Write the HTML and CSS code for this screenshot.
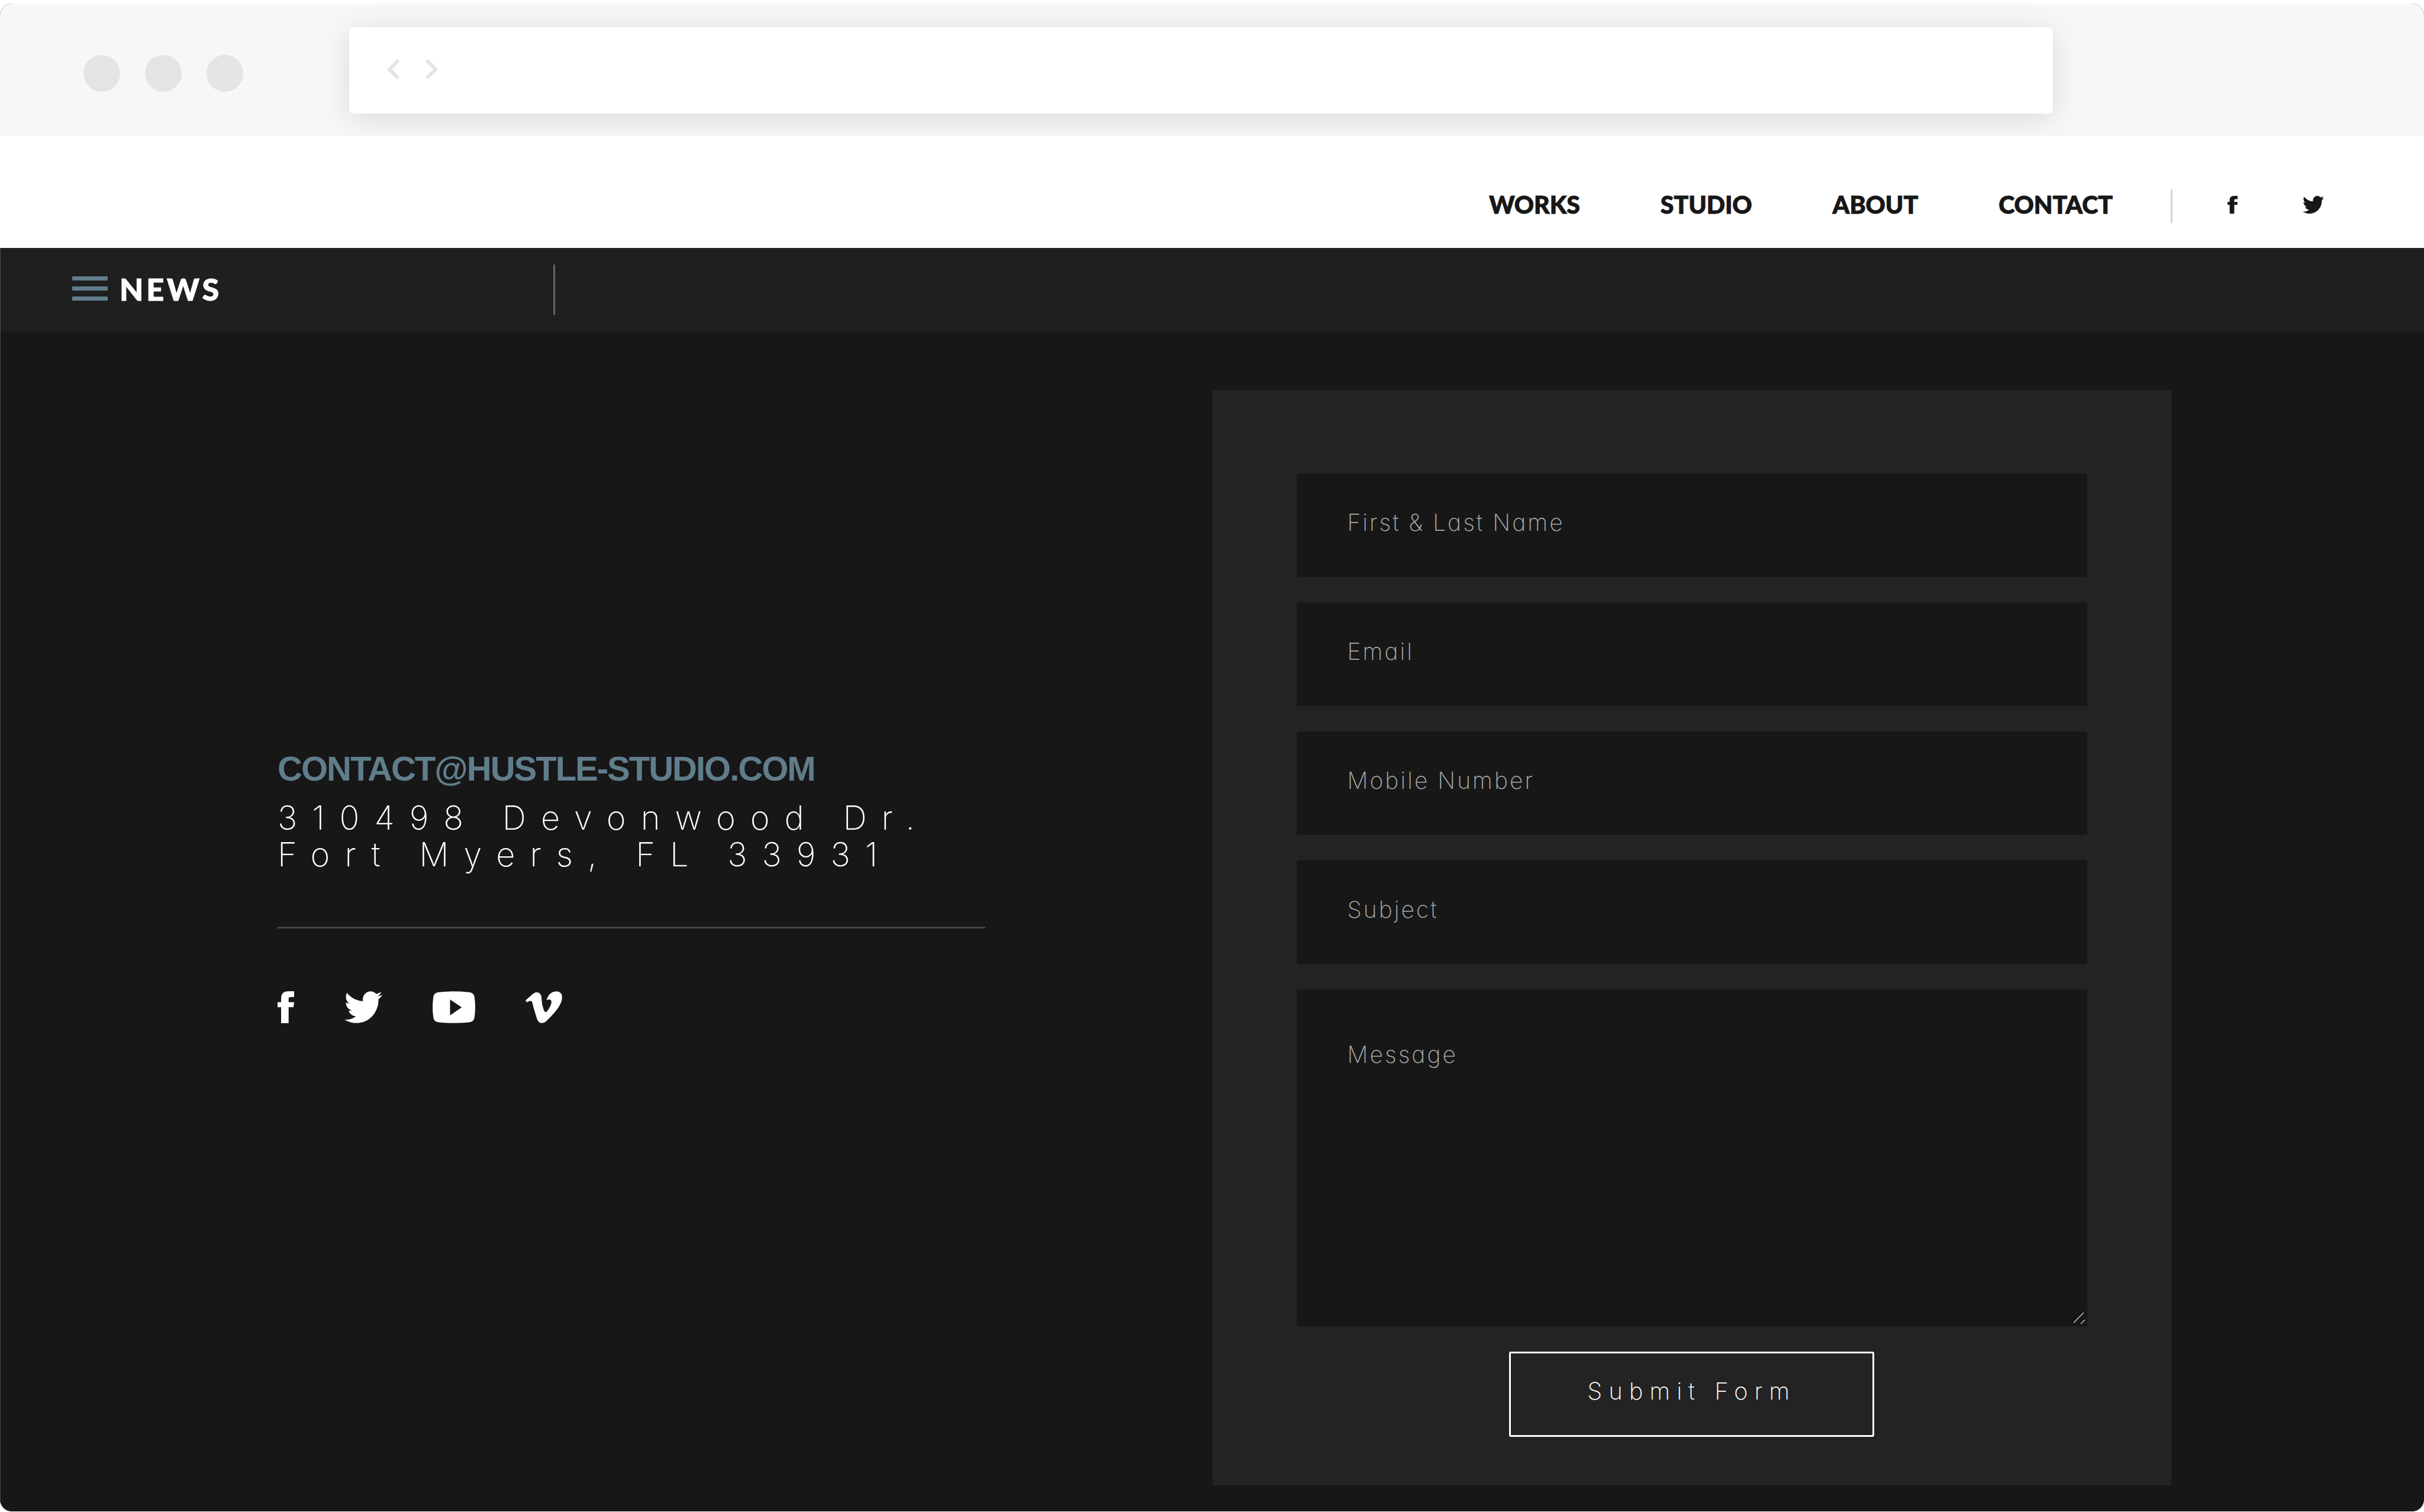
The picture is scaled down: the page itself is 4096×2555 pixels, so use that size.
FILE: index.html
```html
<!DOCTYPE html>
<html lang="en">
<head>
<meta charset="utf-8">
<title>Hustle Studio – Contact</title>
<link rel="stylesheet" href="styles.css">
</head>
<body>
<svg class="sprite" aria-hidden="true">
  <symbol id="facebook" viewBox="0 0 28 54" preserveAspectRatio="none"><path d="M6 54V27H0V18.500H6V12.500C6 4 10.500 0 18.500 0H28V9.800H22.500C19.500 9.800 18.700 11 18.700 13.500V18.500H28L27 27H18.700V54Z"/></symbol>
  <symbol id="twitter" viewBox="0 2.200 24 19.600" preserveAspectRatio="none"><path d="M23.954 4.569c-.885.389-1.83.654-2.825.775 1.014-.611 1.794-1.574 2.163-2.723-.951.555-2.005.959-3.127 1.184-.896-.959-2.173-1.559-3.591-1.559-2.717 0-4.92 2.203-4.92 4.917 0 .39.045.765.127 1.124C7.691 8.094 4.066 6.13 1.64 3.161c-.427.722-.666 1.561-.666 2.475 0 1.71.87 3.213 2.188 4.096-.807-.026-1.566-.248-2.228-.616v.061c0 2.385 1.693 4.374 3.946 4.827-.413.111-.849.171-1.296.171-.314 0-.615-.03-.916-.086.631 1.953 2.445 3.377 4.604 3.417-1.68 1.319-3.809 2.105-6.102 2.105-.39 0-.779-.023-1.17-.067 2.189 1.394 4.768 2.209 7.557 2.209 9.054 0 13.999-7.496 13.999-13.986 0-.209 0-.42-.015-.63.961-.689 1.8-1.56 2.46-2.548l-.047-.02z"/></symbol>
  <symbol id="youtube" viewBox="0 0 72 54"><path fill-rule="evenodd" d="M12 1.500Q36-1 60 1.500C68 2.200 70.500 5 71 12Q73 27 71 42C70.500 49 68 52 60 52.700Q36 55 12 52.700C4 52 1.500 49 1 42Q-1 27 1 12C1.500 5 4 2.200 12 1.500ZM29.500 13.900V40.700L49.200 27.300Z"/></symbol>
  <symbol id="vimeo" viewBox="0 0 62 54"><path d="M0 15.600L2.300 18.800L6 16.800Q10.300 15 11.400 18.800L13.400 27.300L19 45.400Q21.500 53.800 27.400 53.800Q31 53.800 34 51.500Q43 43.500 50.900 33.700Q59 23.500 61 16Q63 7 60 3.800Q57.500 0 51.500 .2Q39.500 1 35.500 15.100Q43 12 43.800 17.500Q44 21.500 40.800 27.300Q36.500 35 34.100 35.400Q32 35 30.800 31.600Q29 26 28.100 22L26.800 9.200Q25.500 1.500 18.100 1.700Q15 2 10.700 6Z"/></symbol>
</svg>
<div class="window">
  <div class="chrome">
    <div class="dots"><span class="dot"></span><span class="dot"></span><span class="dot"></span></div>
    <div class="address-bar">
      <svg class="arrow" viewBox="0 0 22 36" aria-hidden="true"><path d="M19 3L4 18L19 33"/></svg>
      <svg class="arrow" viewBox="0 0 22 36" aria-hidden="true"><path d="M3 3L18 18L3 33"/></svg>
    </div>
  </div>
  <header class="header">
    <nav class="nav">
      <a href="#works">WORKS</a>
      <a href="#studio">STUDIO</a>
      <a href="#about">ABOUT</a>
      <a href="#contact">CONTACT</a>
    </nav>
    <div class="header-social">
      <a href="#facebook" aria-label="Facebook"><svg class="icon-sm icon-sm-f"><use href="#facebook"/></svg></a>
      <a href="#twitter" aria-label="Twitter"><svg class="icon-sm icon-sm-t"><use href="#twitter"/></svg></a>
    </div>
  </header>
  <div class="news-bar">
    <button class="news-toggle" type="button">
      <span class="burger"><span></span><span></span><span></span></span>
      <span>NEWS</span>
    </button>
  </div>
  <main class="main">
    <section class="contact">
      <a class="email" href="mailto:contact@hustle-studio.com">CONTACT@HUSTLE-STUDIO.COM</a>
      <address class="address">310498 Devonwood Dr.<br>Fort Myers, FL 33931</address>
      <hr class="rule">
      <div class="social">
        <a href="#facebook" aria-label="Facebook"><svg class="icon icon-f"><use href="#facebook"/></svg></a>
        <a href="#twitter" aria-label="Twitter"><svg class="icon icon-t"><use href="#twitter"/></svg></a>
        <a href="#youtube" aria-label="YouTube"><svg class="icon icon-y"><use href="#youtube"/></svg></a>
        <a href="#vimeo" aria-label="Vimeo"><svg class="icon icon-v"><use href="#vimeo"/></svg></a>
      </div>
    </section>
    <form class="form">
      <input class="field" type="text" placeholder="First &amp; Last Name" aria-label="First &amp; Last Name">
      <input class="field" type="email" placeholder="Email" aria-label="Email">
      <input class="field" type="tel" placeholder="Mobile Number" aria-label="Mobile Number">
      <input class="field" type="text" placeholder="Subject" aria-label="Subject">
      <div class="message">
        <textarea class="field field-message" placeholder="Message" aria-label="Message"></textarea>
        <svg class="grip" viewBox="0 0 24 24" aria-hidden="true"><path class="grip-shade" d="M1 18L18 1M13 20L20 13"/><path d="M3 20L20 3M15 22L22 15"/></svg>
      </div>
      <button class="submit" type="submit">Submit Form</button>
    </form>
  </main>
</div>
</body>
</html>
```

FILE: styles.css
```css
* {
  box-sizing: border-box;
}

body {
  margin: 0;
  padding: 6px 0 1px;
  background: #fff;
}

a {
  color: inherit;
  text-decoration: none;
}

svg {
  display: block;
  fill: currentColor;
}

.sprite {
  position: absolute;
  width: 0;
  height: 0;
}

.window {
  display: flex;
  flex-direction: column;
  min-height: calc(100vh - 7px);
  border-radius: 20px;
  overflow: hidden;
  background: #171717;
}

/* Browser chrome */
.chrome {
  display: flex;
  align-items: flex-start;
  height: 224px;
  padding-top: 40px;
  background: #f7f7f7;
  overflow: hidden;
}

.dots {
  display: flex;
  gap: 42px;
  width: 14.4%;
  padding: 47px 0 0 141px;
}

.dot {
  width: 62px;
  height: 62px;
  border-radius: 50%;
  background: #e4e4e4;
}

.address-bar {
  display: flex;
  gap: 42px;
  width: 70.3%;
  height: 146px;
  padding: 53px 64px;
  border-radius: 8px;
  background: #fff;
  box-shadow: 0 8px 48px rgba(0, 0, 0, 0.12);
}

.arrow {
  width: 22px;
  height: 36px;
  fill: none;
  stroke: #e4e4e4;
  stroke-width: 6;
}

/* Site header */
.header {
  display: flex;
  justify-content: flex-end;
  align-items: center;
  height: 189px;
  padding: 48px 169px 0 0;
  background: #fff;
  color: #171717;
}

.nav {
  display: flex;
  gap: 136px;
  padding-bottom: 6px;
  font: 900 41px/57px Lato, sans-serif;
  -webkit-text-stroke: 1px currentColor;
}

.header-social {
  display: flex;
  align-items: center;
  gap: 110px;
  height: 57px;
  margin-left: 98px;
  padding: 0 0 6px 93px;
  border-left: 3px solid #d3d3d3;
}

.icon-sm {
  height: 30px;
}

.icon-sm-f {
  width: 17px;
}

.icon-sm-t {
  width: 36px;
}

.news-bar {
  display: flex;
  align-items: center;
  height: 141px;
  border-left: 1px solid #4a4a4a;
  background: #1f1f1f;
}

.news-toggle {
  display: flex;
  align-items: center;
  gap: 20px;
  width: 937px;
  height: 85px;
  padding: 0 0 4px 121px;
  border: 0;
  border-right: 3px solid #666;
  background: none;
  color: #fff;
  font: 900 52px/60px Lato, sans-serif;
  letter-spacing: 5px;
  -webkit-text-stroke: 1px currentColor;
}

.burger {
  display: grid;
  gap: 10px;
  width: 60px;
}

.burger span {
  height: 7px;
  background: #607d8b;
}

/* Contact page */
.main {
  display: grid;
  grid-template-columns: 1fr 1fr;
  align-items: start;
  flex: 1;
  padding: 99px 0 42px;
  border-left: 1px solid #4a4a4a;
}

.contact {
  padding: 606px 384px 0 468px;
}

.email {
  display: block;
  color: #607d8b;
  font: bold 58px/68px "Liberation Sans", Arial, sans-serif;
  letter-spacing: -2px;
  white-space: nowrap;
}

.address {
  margin-top: 18px;
  color: #fff;
  font: 200 56px/62px Inter, sans-serif;
  font-feature-settings: "cv11";
  letter-spacing: 25px;
  white-space: nowrap;
}

.rule {
  height: 3px;
  margin: 91px 0 106px;
  border: 0;
  background: #444;
}

.social {
  display: flex;
  gap: 85px;
  color: #fff;
}

.icon {
  height: 54px;
}

.icon-f {
  width: 28px;
}

.icon-t {
  width: 64px;
}

.icon-y {
  width: 72px;
}

.icon-v {
  width: 62px;
}

.form {
  display: flex;
  flex-direction: column;
  gap: 43px;
  margin-right: 427px;
  padding: 141px 142px 82px;
  background: #232323;
}

.field {
  display: block;
  width: 100%;
  height: 175px;
  padding: 0 86px 10px;
  border: 0;
  border-radius: 4px;
  background: #171717;
  color: #fff;
  font: 200 39px/48px Inter, sans-serif;
  font-feature-settings: "cv11";
  letter-spacing: 3px;
}

.field::placeholder {
  color: #a9a9a9;
  opacity: 1;
}

.message {
  position: relative;
}

.field-message {
  height: 569px;
  padding: 86px;
  resize: none;
}

.grip {
  position: absolute;
  right: 2px;
  bottom: 2px;
  width: 24px;
  height: 24px;
  fill: none;
  stroke: #999;
  stroke-width: 2;
}

.grip-shade {
  stroke: #0a0a0a;
}

.submit {
  align-self: center;
  width: 617px;
  height: 144px;
  padding: 0 0 10px;
  border: 3px solid #fff;
  border-radius: 3px;
  background: none;
  color: #fff;
  font: 200 40px/48px Inter, sans-serif;
  font-feature-settings: "cv11";
  letter-spacing: 11px;
}
```
